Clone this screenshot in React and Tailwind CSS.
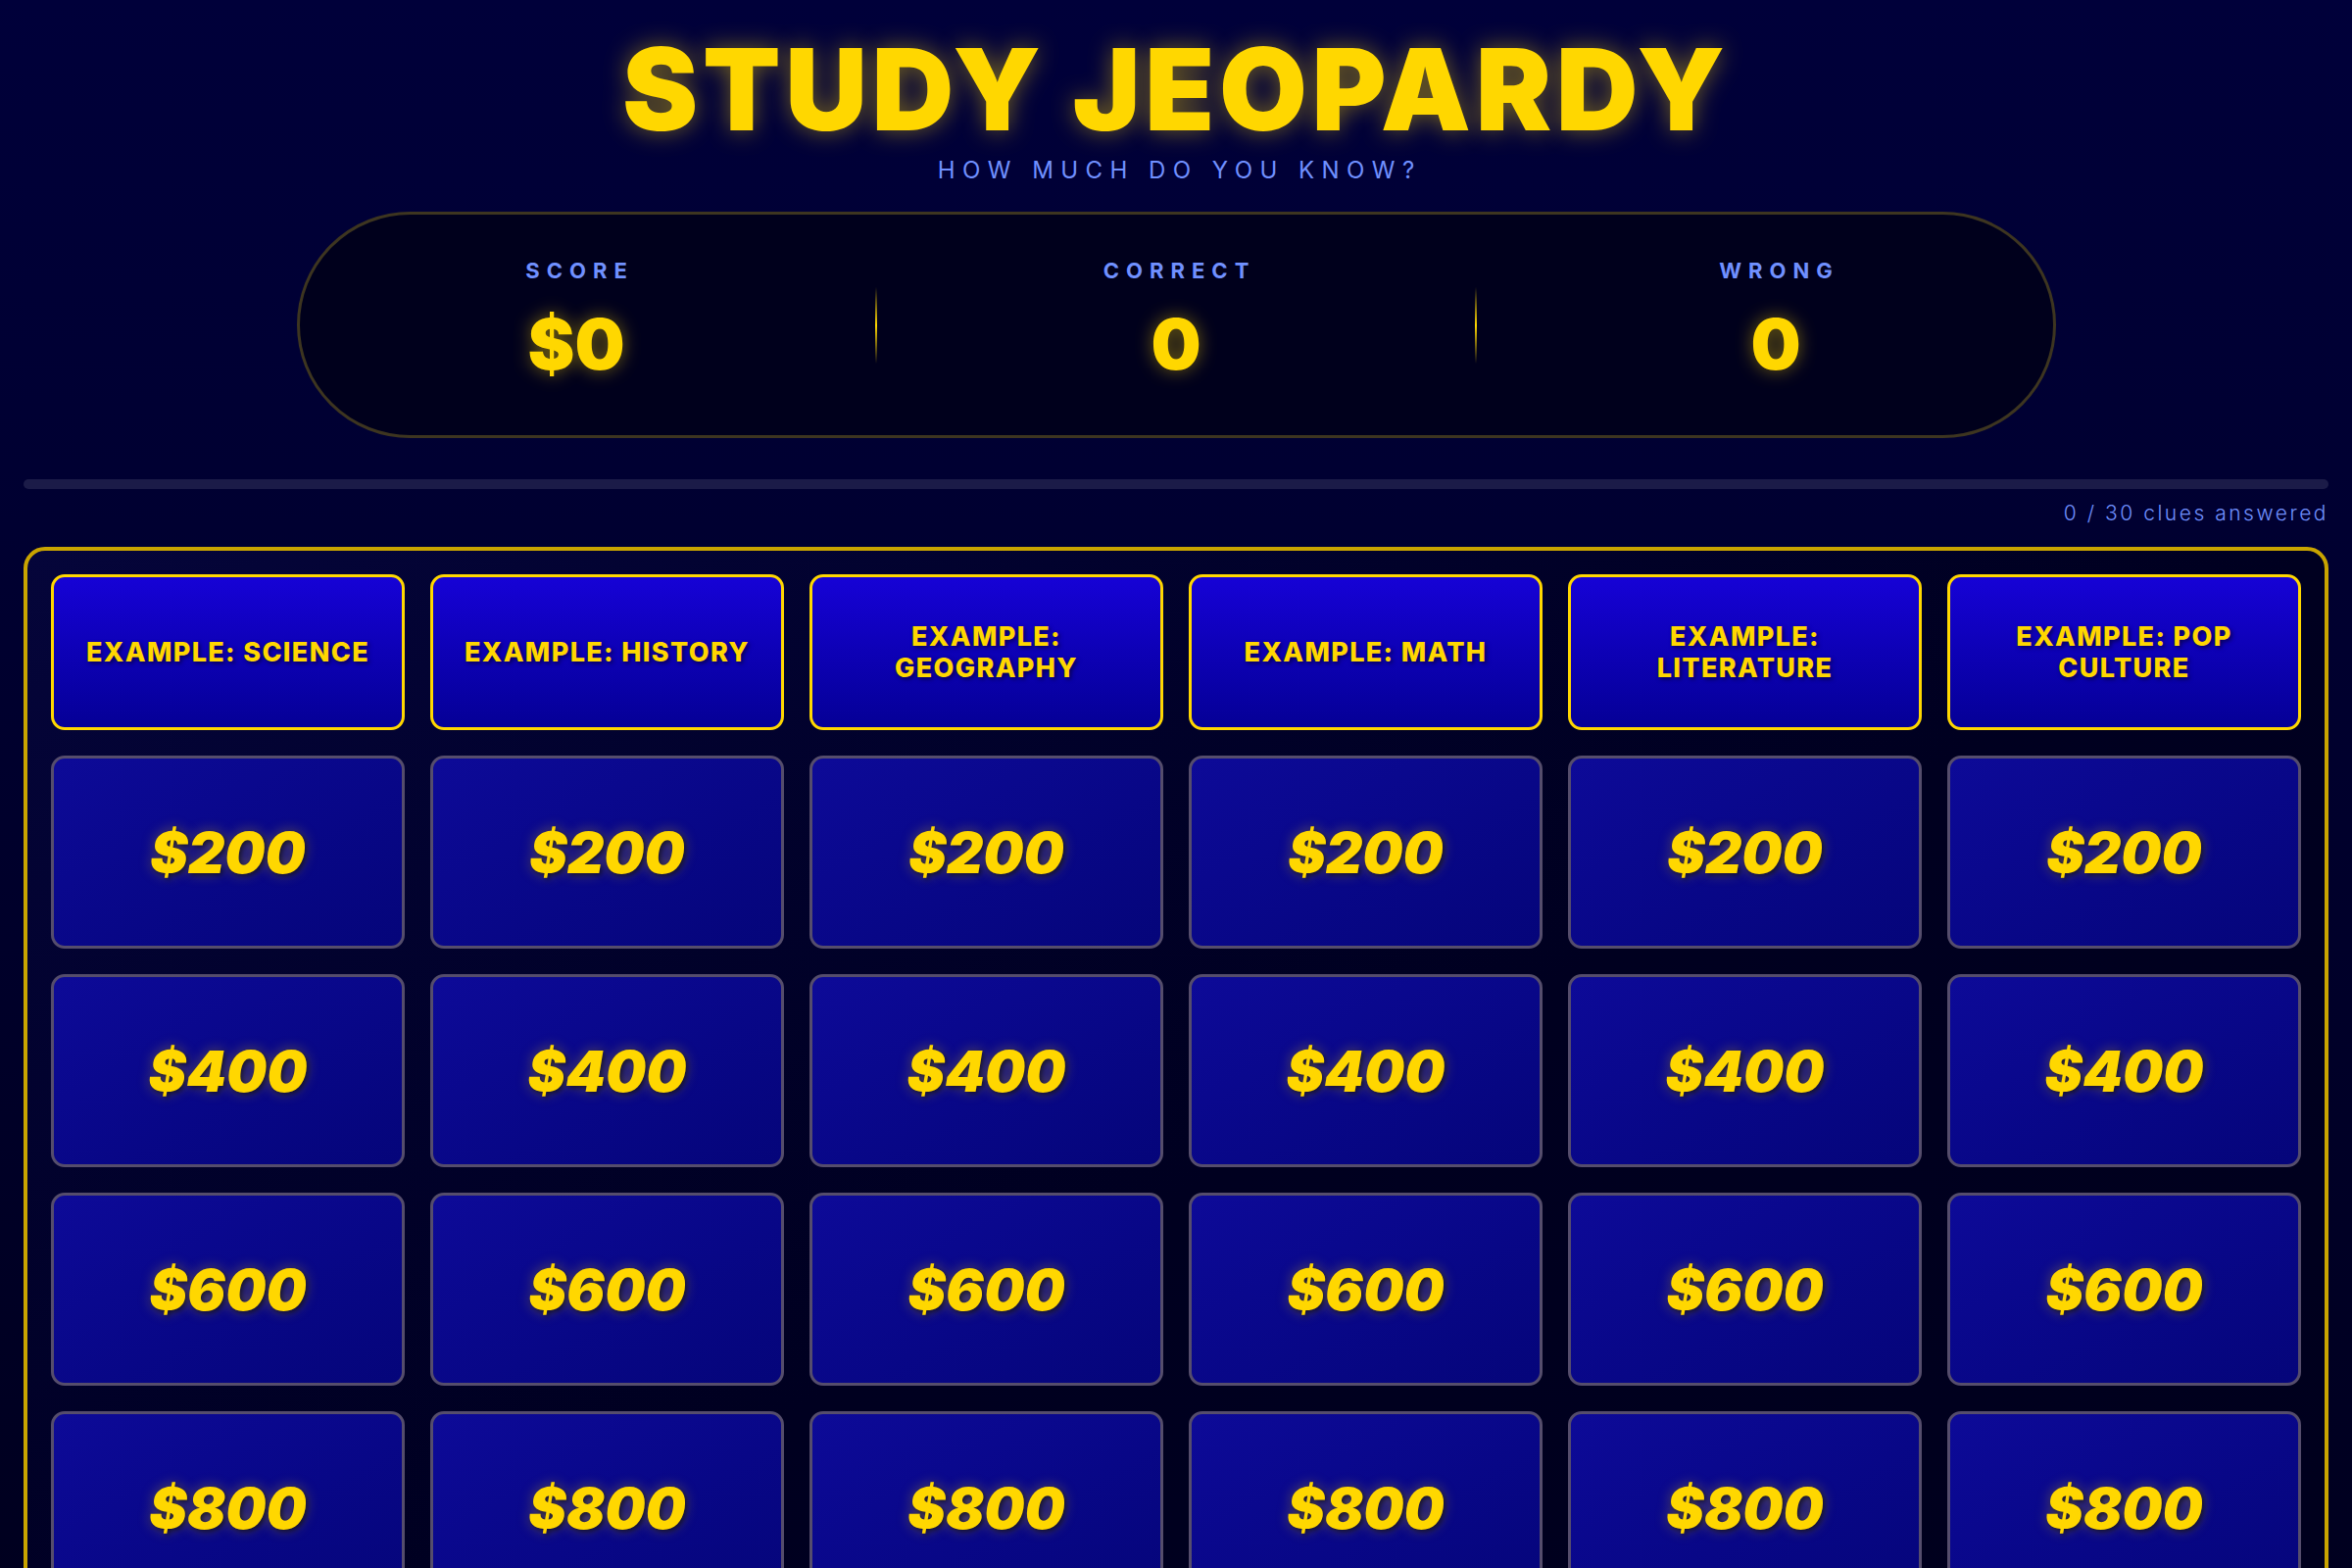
import { useState } from "react";

const categories = [
  "Example: Science",
  "Example: History",
  "Example: Geography",
  "Example: Math",
  "Example: Literature",
  "Example: Pop Culture",
];

const values = [200, 400, 600, 800, 1000];

function Stat({ label, value }) {
  return (
    <div className="w-[500px] mb-[11px] flex flex-col items-center">
      <p className="text-[22px] leading-none font-bold tracking-[0.32em] pl-[0.32em] text-[#7090ff]">{label}</p>
      <p className="mt-[28px] text-[72px] leading-none font-black text-[#ffd700] [text-shadow:0_0_18px_rgba(255,215,0,0.45)]">
        {value}
      </p>
    </div>
  );
}

function Divider() {
  return <div className="w-[2px] h-[78px] mx-[55px] bg-gradient-to-b from-transparent via-[#ffd700] to-transparent" />;
}

export default function App() {
  const [answered] = useState([]);
  const total = categories.length * values.length;

  return (
    <div className="min-h-screen bg-gradient-to-b from-[#00003a] via-[#00002a] to-[#00001a] px-[24px] pb-[40px] font-['Inter','Noto_Sans',sans-serif]">
      <header className="pt-[33px] flex flex-col items-center">
        <h1 className="text-[116px] leading-none font-black tracking-[0.04em] text-[#ffd700] [text-shadow:0_0_24px_rgba(255,215,0,0.45)]">
          STUDY JEOPARDY
        </h1>
        <p className="mt-[13px] text-[24px] leading-none tracking-[0.31em] pl-[0.31em] text-[#7090ff]">HOW MUCH DO YOU KNOW?</p>
      </header>

      <div className="mt-[30px] mx-auto w-[1795px] h-[231px] rounded-full border-[3px] border-[#3d3520] bg-[#00001c] flex items-center justify-center">
        <Stat label="SCORE" value="$0" />
        <Divider />
        <Stat label="CORRECT" value="0" />
        <Divider />
        <Stat label="WRONG" value="0" />
      </div>

      <div className="mt-[42px] h-[10px] rounded-full bg-[#1b1b48]">
        <div className="h-full rounded-full bg-[#ffd700]" style={{ width: `${(answered.length / total) * 100}%` }} />
      </div>
      <p className="mt-[14px] text-right text-[21px] leading-none font-light tracking-[0.12em] text-[#7090ff]">
        {answered.length} / {total} clues answered
      </p>

      <div className="mt-[24px] rounded-[22px] border-4 border-[#c9a400] bg-gradient-to-br from-[#05053a] via-[#000020] to-[#00001c] p-[24px]">
        <div className="grid grid-cols-6 gap-[26px]">
          {categories.map((c) => (
            <div
              key={c}
              className="h-[159px] rounded-[14px] border-[3px] border-[#ffd700] bg-gradient-to-b from-[#1602d6] to-[#050096] flex items-center justify-center px-[28px]"
            >
              <span className="text-center text-[27px] leading-[32px] font-extrabold uppercase tracking-[0.05em] text-[#ffd700] [text-shadow:2px_2px_4px_rgba(0,0,0,0.55)]">
                {c}
              </span>
            </div>
          ))}
          {values.map((v) =>
            categories.map((c) => (
              <button
                key={c + v}
                className="h-[197px] rounded-[14px] border-[3px] border-[#554d6c] bg-gradient-to-br from-[#0d0a98] to-[#05057a] flex items-center justify-center"
              >
                <span className="text-[58px] leading-none font-black italic text-[#ffd700] [text-shadow:2px_2px_5px_rgba(0,0,0,0.6),0_0_14px_rgba(255,215,0,0.35)]">
                  ${v}
                </span>
              </button>
            ))
          )}
        </div>
      </div>
    </div>
  );
}
